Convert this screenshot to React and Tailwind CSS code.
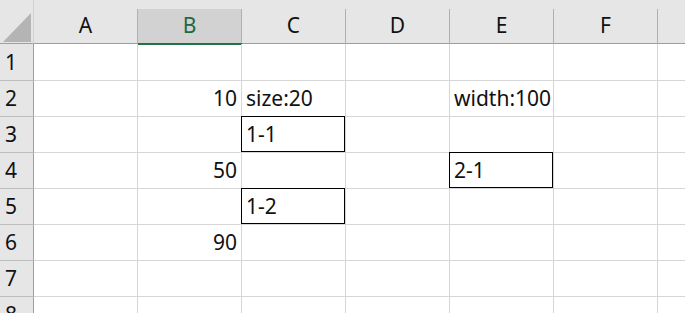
import React from 'react';

const COLS = ['A', 'B', 'C', 'D', 'E', 'F', 'G'];

// cell contents keyed by row number then column letter
const DATA = {
    2: { B: { text: '10', right: true }, C: { text: 'size:20' }, E: { text: 'width:100' } },
    3: { C: { text: '1-1', box: true } },
    4: { B: { text: '50', right: true }, E: { text: '2-1', box: true } },
    5: { C: { text: '1-2', box: true } },
    6: { B: { text: '90', right: true } },
};

function Cell({ cell }) {
    return (
        <div
            className={`relative w-[104px] h-full shrink-0 flex items-end px-[4px] pb-[4px] border-r border-b border-[#d6d6d6] leading-[28px] ${
                cell && cell.right ? 'justify-end' : 'justify-start'
            }`}
        >
            {cell && <span className="whitespace-nowrap">{cell.text}</span>}
            {cell && cell.box && (
                <div className="absolute -left-px -top-px right-0 bottom-0 border border-black" />
            )}
        </div>
    );
}

function Row({ n }) {
    const cells = DATA[n] || {};
    return (
        <div className={`flex ${n === 1 ? 'h-[37px]' : 'h-[36px]'}`}>
            <div className="w-[34px] h-full shrink-0 bg-[#e6e6e6] border-r border-r-[#a0a0a0] border-b border-b-[#bebebe] flex items-end pl-[5px] pb-[4px] leading-[28px]">
                {n}
            </div>
            {COLS.map((c) => (
                <Cell key={c} cell={cells[c]} />
            ))}
        </div>
    );
}

export default function App() {
    return (
        <div className="w-[685px] h-[313px] overflow-hidden bg-white text-[21px] text-[#111] font-['Noto_Sans',sans-serif]">
            {/* column header */}
            <div className="flex h-[44px] bg-[#e6e6e6]">
                <div className="w-[34px] h-full shrink-0 border-r border-r-[#d0d0d0] border-b border-b-[#9e9e9e] flex items-end justify-end pr-[2px] pb-[1px]">
                    <svg width="28" height="29" viewBox="0 0 28 29">
                        <polygon points="0,29 28,29 28,0" fill="#b4b4b4" />
                    </svg>
                </div>
                <div className="flex flex-col">
                    <div className="h-[9px]" />
                    <div className="flex h-[35px]">
                        {COLS.map((c) => (
                            <div
                                key={c}
                                className={`relative w-[104px] h-full shrink-0 flex items-end justify-center pb-[4px] leading-[28px] border-r border-r-[#b0b0b0] border-b border-b-[#9e9e9e] ${
                                    c === 'B' ? 'bg-[#d2d2d2] text-[#1e6b41]' : ''
                                }`}
                            >
                                {c}
                                {c === 'B' && (
                                    <div className="absolute left-0 -right-px -bottom-[2px] h-[2px] bg-[#217346]" />
                                )}
                            </div>
                        ))}
                    </div>
                </div>
            </div>
            {[1, 2, 3, 4, 5, 6, 7, 8].map((n) => (
                <Row key={n} n={n} />
            ))}
        </div>
    );
}
